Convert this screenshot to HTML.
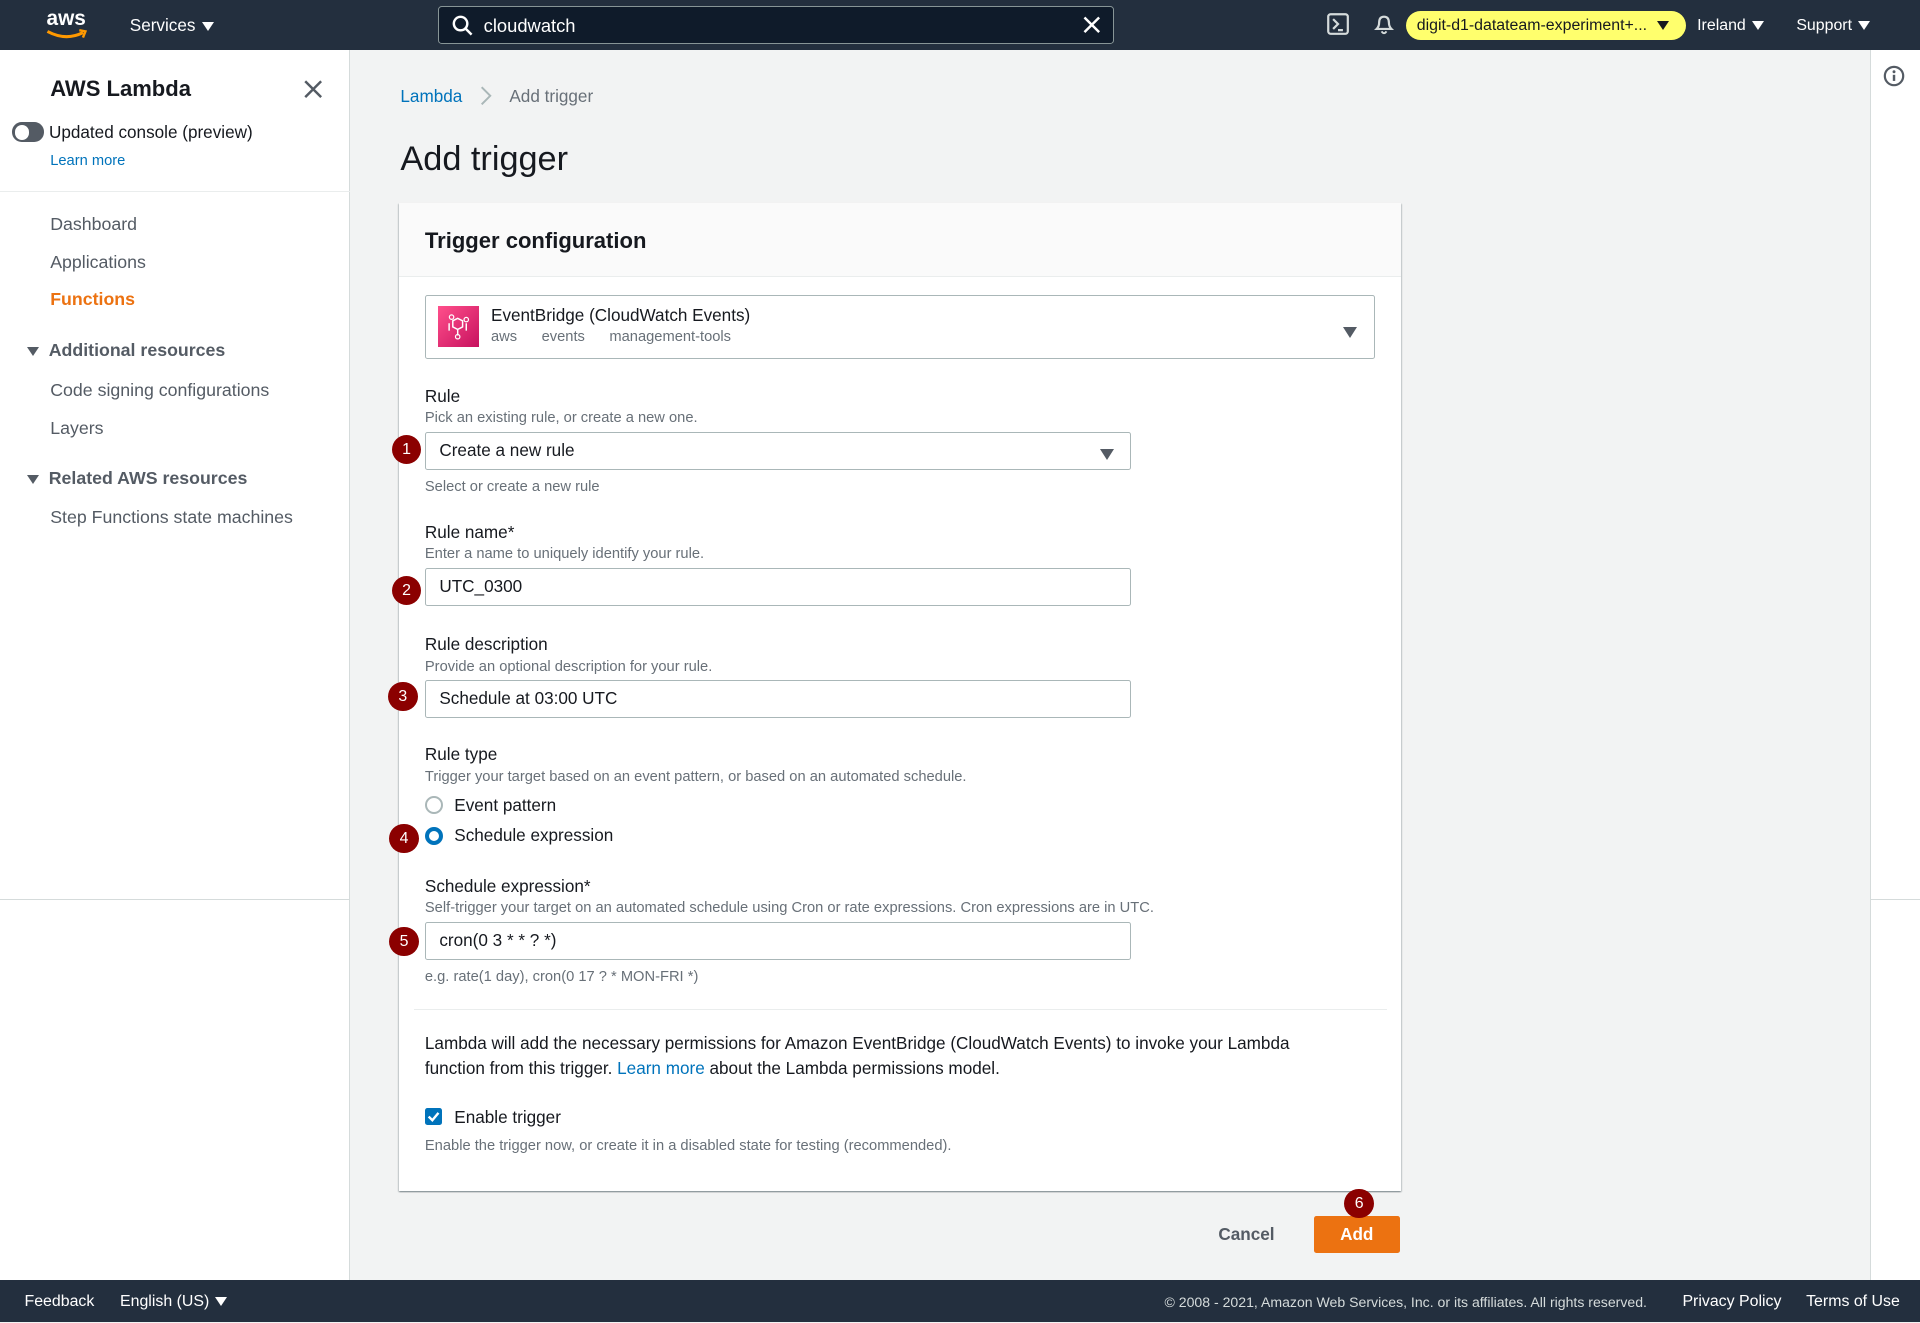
<!DOCTYPE html>
<html><head><meta charset="utf-8"><style>
html{zoom:1.22449}
*{box-sizing:border-box;margin:0;padding:0}
body{width:1568px;height:1080px;position:relative;overflow:hidden;background:#f2f3f3;font-family:"Liberation Sans",sans-serif;color:#16191f;font-size:14px}
.a{position:absolute;white-space:nowrap}
.top{left:0;top:0;width:1568px;height:41px;background:#232f3e}
.side{left:0;top:41px;width:286px;height:1004px;background:#fff;border-right:1px solid #d5dbdb}
.rs{left:1527px;top:41px;width:41px;height:1004px;background:#fff;border-left:1px solid #d5dbdb}
.foot{left:0;top:1045px;width:1568px;height:35px;background:#232f3e;color:#fff;font-size:13px}
.card{left:326px;top:166px;width:818px;height:807px;background:#fff;box-shadow:0 1px 1px rgba(0,28,36,.3),1px 1px 1px rgba(0,28,36,.15),-1px 1px 1px rgba(0,28,36,.15)}
.inp{position:absolute;left:347px;width:577px;height:31px;border:1px solid #aab7b8;border-radius:2px;background:#fff;padding:0 11px;line-height:29px;font-size:14px}
.lab{position:absolute;left:347px;font-size:14px;margin-top:1px}
.desc{position:absolute;left:347px;font-size:12px;color:#687078;margin-top:1px}
.bad{position:absolute;width:24px;height:24px;border-radius:50%;background:#8b0000;color:#fff;font-size:13px;text-align:center;line-height:24px}
.nav{position:absolute;left:41px;color:#545b64;font-size:14.5px;margin-top:1px}
.tri{display:inline-block;width:0;height:0;border-left:5px solid transparent;border-right:5px solid transparent;border-top:8px solid currentColor;vertical-align:middle;margin-left:5px}
</style></head><body>
<div class="a top"></div>
<div class="a" style="left:38px;top:6px;color:#fff;font-size:17px;font-weight:bold">aws</div>
<svg class="a" style="left:37px;top:24px" width="36" height="10"><path d="M2 2 Q17 10 31 3" stroke="#f90" stroke-width="2.5" fill="none"/><path d="M28 1 L33 2 L31 7" stroke="#f90" stroke-width="2" fill="none"/></svg>
<div class="a" style="left:106px;top:12px;color:#fff;font-size:14px">Services<span class="tri" style="color:#fff"></span></div>
<div class="a" style="left:358px;top:5px;width:552px;height:31px;border:1px solid #879596;border-radius:3px;background:#0f1b2a"></div>
<svg class="a" style="left:369px;top:12px" width="18" height="18"><circle cx="7" cy="7" r="5.5" stroke="#fff" stroke-width="2" fill="none"/><path d="M11 11 L16 16" stroke="#fff" stroke-width="2"/></svg>
<div class="a" style="left:395px;top:12px;color:#fff;font-size:15px">cloudwatch</div>
<svg class="a" style="left:884px;top:12px" width="16" height="16"><path d="M2 2L14 14M14 2L2 14" stroke="#fff" stroke-width="2"/></svg>
<svg class="a" style="left:1084px;top:11px" width="18" height="18"><rect x="1" y="1" width="16" height="16" rx="2" stroke="#d5dbdb" stroke-width="1.8" fill="none"/><path d="M5 5L9 9L5 13M9 14H13" stroke="#d5dbdb" stroke-width="1.8" fill="none"/></svg>
<svg class="a" style="left:1121px;top:11px" width="18" height="19"><path d="M3 13 Q5 11 5 8 Q5 3 9 3 Q13 3 13 8 Q13 11 15 13 Z" stroke="#d5dbdb" stroke-width="1.8" fill="none"/><path d="M7 15 Q9 18 11 15" stroke="#d5dbdb" stroke-width="1.6" fill="none"/></svg>
<div class="a" style="left:1148px;top:9px;width:229px;height:24px;border-radius:12px;background:#ffff6d;color:#16191f;font-size:13px;line-height:24px;padding-left:9px">digit-d1-datateam-experiment+...<span class="tri" style="margin-left:8px"></span></div>
<div class="a" style="left:1386px;top:14px;color:#fff;font-size:13px">Ireland<span class="tri"></span></div>
<div class="a" style="left:1467px;top:14px;color:#fff;font-size:13px">Support<span class="tri"></span></div>

<div class="a side"></div>
<div class="a" style="left:0;top:156px;width:286px;height:1px;background:#eaeded"></div>
<div class="a" style="left:41px;top:62px;font-size:18px;font-weight:bold">AWS Lambda</div>
<svg class="a" style="left:248px;top:65px" width="15" height="15"><path d="M1 1L14 14M14 1L1 14" stroke="#545b64" stroke-width="2"/></svg>
<div class="a" style="left:10px;top:100px;width:26px;height:16px;border-radius:8px;background:#545b64"></div>
<div class="a" style="left:12px;top:102px;width:12px;height:12px;border-radius:50%;background:#fff"></div>
<div class="a" style="left:40px;top:100px;font-size:14px">Updated console (preview)</div>
<div class="a" style="left:41px;top:125px;font-size:12px;color:#0073bb">Learn more</div>
<div class="nav" style="top:174px">Dashboard</div>
<div class="nav" style="top:205px">Applications</div>
<div class="nav" style="top:235px;color:#ec7211;font-weight:bold">Functions</div>
<div class="nav" style="left:22px;top:277px;font-weight:bold"><span class="tri" style="margin:0 8px 0 0;color:#545b64"></span>Additional resources</div>
<div class="nav" style="top:309px">Code signing configurations</div>
<div class="nav" style="top:340px">Layers</div>
<div class="nav" style="left:22px;top:381px;font-weight:bold"><span class="tri" style="margin:0 8px 0 0;color:#545b64"></span>Related AWS resources</div>
<div class="nav" style="top:413px">Step Functions state machines</div>
<div class="a" style="left:0;top:734px;width:286px;height:1px;background:#d5dbdb"></div>

<div class="a rs"></div>
<div class="a" style="left:1527px;top:734px;width:41px;height:1px;background:#d5dbdb"></div>
<svg class="a" style="left:1538px;top:53px" width="18" height="18"><circle cx="9" cy="9" r="7.5" stroke="#545b64" stroke-width="1.8" fill="none"/><circle cx="9" cy="5.5" r="1.2" fill="#545b64"/><path d="M9 8V13" stroke="#545b64" stroke-width="2"/></svg>

<div class="a" style="left:327px;top:70px;font-size:14px;color:#0073bb">Lambda</div>
<svg class="a" style="left:390px;top:70px" width="12" height="16"><path d="M3 1L10 8L3 15" stroke="#aab7b8" stroke-width="1.6" fill="none"/></svg>
<div class="a" style="left:416px;top:70px;font-size:14px;color:#687078">Add trigger</div>
<div class="a" style="left:327px;top:114px;font-size:28px">Add trigger</div>

<div class="a card"></div>
<div class="a" style="left:326px;top:166px;width:818px;height:60px;background:#fafafa;border-bottom:1px solid #eaeded"></div>
<div class="a" style="left:347px;top:186px;font-size:18px;font-weight:bold">Trigger configuration</div>
<div class="a" style="left:347px;top:241px;width:776px;height:52px;border:1px solid #aab7b8;border-radius:2px;background:#fff"></div>
<div class="a" style="left:358px;top:250px;width:33px;height:33px;background:linear-gradient(135deg,#ff4f8b,#c7125f)"></div>
<svg class="a" style="left:362px;top:254px" width="25" height="25"><path d="M8 8L12 6L16 8L16 13L12 15L8 13Z M5 10V16 M19 10V16 M12 15V20" stroke="#fff" stroke-width="1.2" fill="none"/><circle cx="7" cy="5" r="1.8" stroke="#fff" fill="none"/><circle cx="19" cy="7" r="1.8" stroke="#fff" fill="none"/><circle cx="12" cy="21" r="1.8" stroke="#fff" fill="none"/></svg>
<div class="a" style="left:401px;top:249px;font-size:14px">EventBridge (CloudWatch Events)</div>
<div class="a" style="left:401px;top:269px;font-size:12px;color:#687078">aws&nbsp;&nbsp;&nbsp;&nbsp;&nbsp;&nbsp;events&nbsp;&nbsp;&nbsp;&nbsp;&nbsp;&nbsp;management-tools</div>
<div class="a" style="left:1097px;top:262px;color:#545b64"><span class="tri" style="margin:0;border-left-width:6px;border-right-width:6px;border-top-width:9px"></span></div>

<div class="lab" style="top:314px">Rule</div>
<div class="desc" style="top:334px">Pick an existing rule, or create a new one.</div>
<div class="inp" style="top:353px">Create a new rule</div>
<div class="a" style="left:898px;top:362px;color:#545b64"><span class="tri" style="margin:0;border-left-width:6px;border-right-width:6px;border-top-width:9px"></span></div>
<div class="bad" style="left:320px;top:355px">1</div>
<div class="desc" style="top:390px">Select or create a new rule</div>

<div class="lab" style="top:425px">Rule name*</div>
<div class="desc" style="top:445px">Enter a name to uniquely identify your rule.</div>
<div class="inp" style="top:464px">UTC_0300</div>
<div class="bad" style="left:320px;top:470px">2</div>

<div class="lab" style="top:517px">Rule description</div>
<div class="desc" style="top:537px">Provide an optional description for your rule.</div>
<div class="inp" style="top:555px">Schedule at 03:00 UTC</div>
<div class="bad" style="left:317px;top:557px">3</div>

<div class="lab" style="top:607px">Rule type</div>
<div class="desc" style="top:627px">Trigger your target based on an event pattern, or based on an automated schedule.</div>
<div class="a" style="left:347px;top:650px;width:15px;height:15px;border:2px solid #aab7b8;border-radius:50%"></div>
<div class="lab" style="left:371px;top:648px">Event pattern</div>
<div class="a" style="left:347px;top:675px;width:15px;height:15px;border:4px solid #0073bb;border-radius:50%;background:#fff"></div>
<div class="lab" style="left:371px;top:673px">Schedule expression</div>
<div class="bad" style="left:318px;top:673px">4</div>

<div class="lab" style="top:714px">Schedule expression*</div>
<div class="desc" style="top:734px">Self-trigger your target on an automated schedule using Cron or rate expressions. Cron expressions are in UTC.</div>
<div class="inp" style="top:753px">cron(0 3 * * ? *)</div>
<div class="bad" style="left:318px;top:757px">5</div>
<div class="desc" style="top:790px">e.g. rate(1 day), cron(0 17 ? * MON-FRI *)</div>

<div class="a" style="left:338px;top:824px;width:795px;height:1px;background:#eaeded"></div>
<div class="a" style="left:347px;top:842px;font-size:14px;line-height:20px;white-space:normal;width:735px">Lambda will add the necessary permissions for Amazon EventBridge (CloudWatch Events) to invoke your Lambda function from this trigger. <span style="color:#0073bb">Learn more</span> about the Lambda permissions model.</div>
<div class="a" style="left:347px;top:905px;width:14px;height:14px;border-radius:2px;background:#0073bb"></div>
<svg class="a" style="left:347px;top:905px" width="14" height="14"><path d="M3 7L6 10L11 4" stroke="#fff" stroke-width="2" fill="none"/></svg>
<div class="lab" style="left:371px;top:903px">Enable trigger</div>
<div class="desc" style="top:928px">Enable the trigger now, or create it in a disabled state for testing (recommended).</div>

<div class="a" style="left:995px;top:1000px;font-size:14px;font-weight:bold;color:#545b64">Cancel</div>
<div class="a" style="left:1073px;top:993px;width:70px;height:30px;background:#ec7211;border-radius:2px;color:#fff;font-weight:bold;text-align:center;line-height:30px">Add</div>
<div class="bad" style="left:1098px;top:971px">6</div>

<div class="a foot"></div>
<div class="a" style="left:20px;top:1056px;color:#fff;font-size:13px">Feedback</div>
<div class="a" style="left:98px;top:1056px;color:#fff;font-size:13px">English (US)<span class="tri"></span></div>
<div class="a" style="left:951px;top:1057px;color:#d5dbdb;font-size:11.5px">© 2008 - 2021, Amazon Web Services, Inc. or its affiliates. All rights reserved.</div>
<div class="a" style="left:1374px;top:1056px;color:#fff;font-size:13px">Privacy Policy</div>
<div class="a" style="left:1475px;top:1056px;color:#fff;font-size:13px">Terms of Use</div>
</body></html>
